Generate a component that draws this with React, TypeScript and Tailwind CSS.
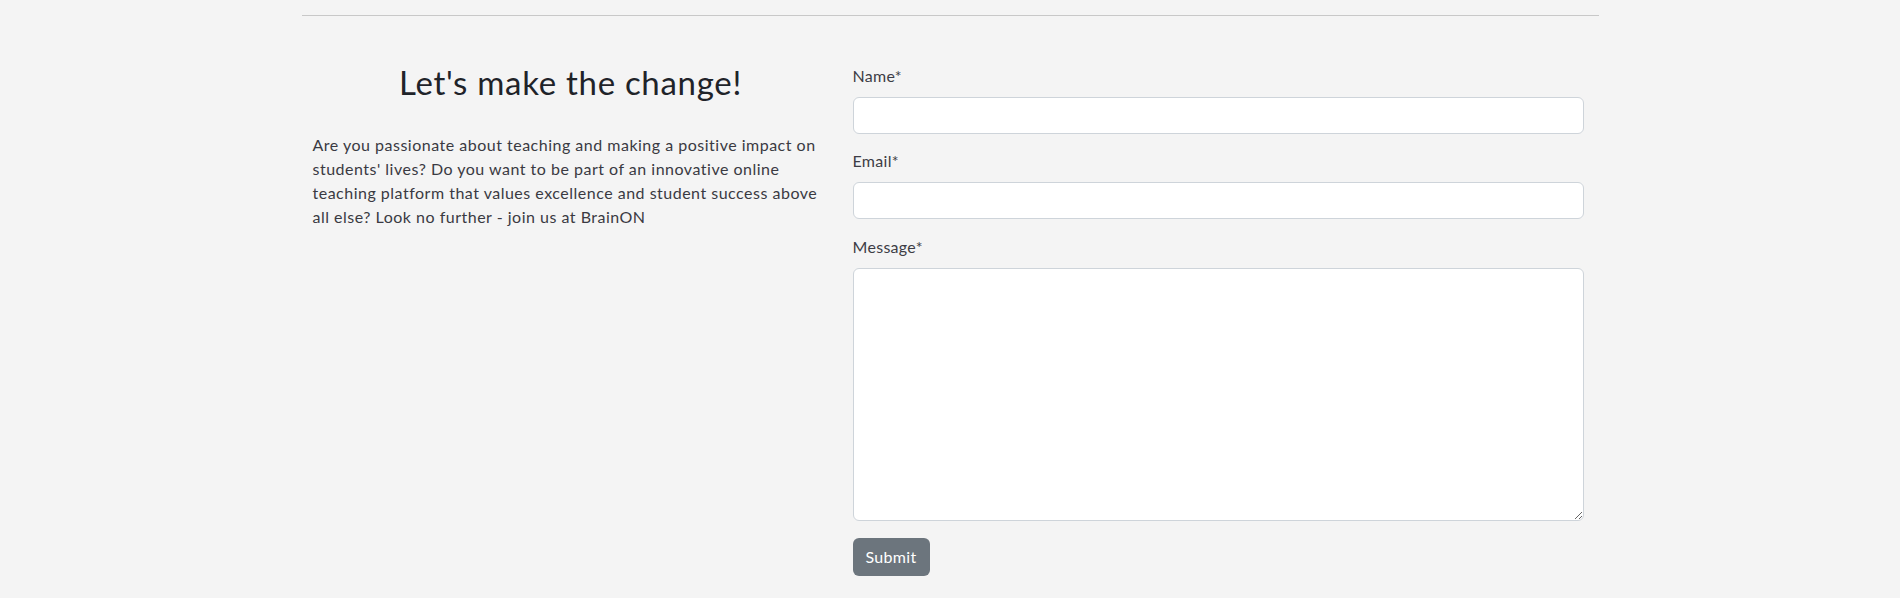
import React from 'react';

// Contact / join-us section: intro text on the left, form on the right

const labelClass = 'block text-[16px] leading-[24px] text-[#3d3d45] tracking-[0.3px] mb-[9px]';
const fieldClass =
  'block w-full bg-white border border-[#ced4da] rounded-[6px] px-3 text-[16px] text-[#212529] outline-none';

export default function App() {
  return (
    <div
      className="min-h-[598px] bg-[#f4f4f4]"
      style={{ fontFamily: 'Lato, "Open Sans", sans-serif' }}
    >
      <div className="mx-auto w-[1297px] pt-[15px]">
        <hr className="border-0 border-t border-[#c8c8c8] m-0" />

        <div className="flex pt-[46px]">
          {/* left column */}
          <div className="ml-[11px] w-[516px] shrink-0">
            <h2 className="text-center text-[33px] leading-[40px] tracking-[0.7px] font-normal text-[#1f2329]">
              Let's make the change!
            </h2>
            <p className="mt-[31px] text-[16px] leading-[24px] tracking-[0.5px] text-[#3a3a42]">
              Are you passionate about teaching and making a positive impact on students' lives? Do you
              want to be part of an innovative online teaching platform that values excellence and student
              success above all else? Look no further - join us at BrainON
            </p>
          </div>

          {/* form column */}
          <form className="ml-[24px] mt-[2px] w-[731px]" onSubmit={(e) => e.preventDefault()}>
            <label className={labelClass}>Name*</label>
            <input type="text" className={fieldClass + ' h-[37px]'} />

            <label className={labelClass + ' mt-[15px]'}>Email*</label>
            <input type="email" className={fieldClass + ' h-[37px]'} />

            <label className={labelClass + ' mt-[16px]'}>Message*</label>
            <textarea className={fieldClass + ' h-[253px] py-2 resize-y'} />

            <button
              type="submit"
              className="mt-[17px] h-[38px] w-[77px] rounded-[6px] bg-[#6c757d] text-white text-[16px] leading-[24px] tracking-[0.3px]"
            >
              Submit
            </button>
          </form>
        </div>
      </div>
    </div>
  );
}
